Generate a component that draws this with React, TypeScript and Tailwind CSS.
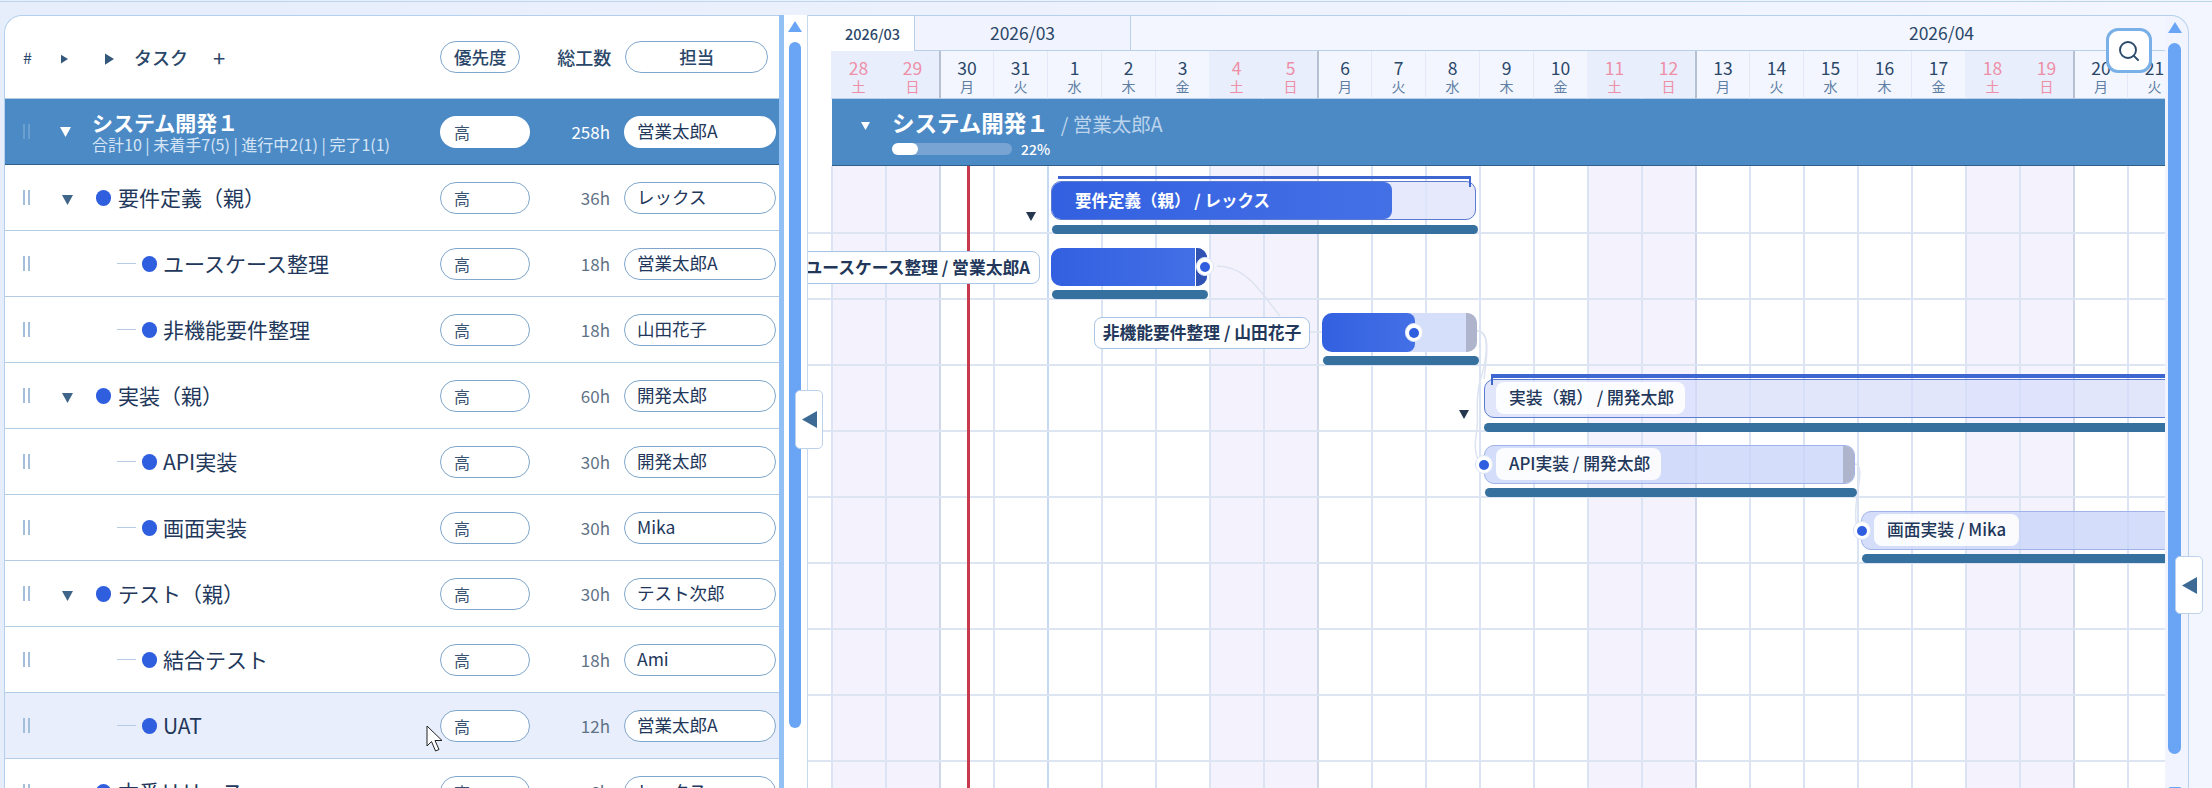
import { Search } from "lucide-react";

const rows = [
  { name: "要件定義（親）", hours: "36h", owner: "レックス", parent: true },
  { name: "ユースケース整理", hours: "18h", owner: "営業太郎A" },
  { name: "非機能要件整理", hours: "18h", owner: "山田花子" },
  { name: "実装（親）", hours: "60h", owner: "開発太郎", parent: true },
  { name: "API実装", hours: "30h", owner: "開発太郎" },
  { name: "画面実装", hours: "30h", owner: "Mika" },
  { name: "テスト（親）", hours: "30h", owner: "テスト次郎", parent: true },
  { name: "結合テスト", hours: "18h", owner: "Ami" },
  { name: "UAT", hours: "12h", owner: "営業太郎A", hover: true },
  { name: "本番リリース", hours: "6h", owner: "レックス", parent: true },
];

const weekNames = ["土", "日", "月", "火", "水", "木", "金"];
const dates = [28, 29, 30, 31, ...Array.from({ length: 21 }, (_, i) => i + 1)];
const days = dates.map((d, i) => ({ d, w: weekNames[i % 7], first: d === 1 }));

const Down = ({ className }: { className: string }) => (
  <svg viewBox="0 0 10 10" className={className}>
    <polygon points="0,1 10,1 5,10" fill="currentColor" />
  </svg>
);

const Right = ({ className }: { className: string }) => (
  <svg viewBox="0 0 8 10" className={className}>
    <polygon points="0,0 8,5 0,10" fill="currentColor" />
  </svg>
);

const Left = ({ className }: { className: string }) => (
  <svg viewBox="0 0 15 17" className={className}>
    <polygon points="15,0 15,17 0,8.5" fill="currentColor" />
  </svg>
);

const Grip = ({ className }: { className: string }) => (
  <div className={`h-[15px] w-[7px] border-x-2 ${className}`} />
);

const Knob = ({ className }: { className: string }) => (
  <div className={`absolute z-30 flex h-[19px] w-[18px] items-center justify-center rounded-full border border-[#dbe5f7] bg-white ${className}`}>
    <div className="h-[10px] w-[10px] rounded-full bg-[#2f5fdf]" />
  </div>
);

const TaskRow = ({ row }: { row: (typeof rows)[number] }) => (
  <div className={`flex h-[66px] shrink-0 items-center border-b border-[#b3cce6] ${row.hover ? "bg-[#e8eefb]" : "bg-white"}`}>
    <div className="ml-[18px] w-[36px] shrink-0">
      <Grip className="border-[#a3bfdc]" />
    </div>
    <div className="flex w-[381px] shrink-0 items-center">
      {row.parent ? (
        <>
          <Down className="ml-[3px] mt-[3px] h-[11px] w-[11px] text-[#3f6588]" />
          <div className="ml-[23px] h-[16px] w-[15px] rounded-full bg-[#2f5fdf]" />
          <span className="ml-[7px] text-[21px] leading-none text-[#22375a]">{row.name}</span>
        </>
      ) : (
        <>
          <div className="ml-[58px] h-px w-[19px] bg-[#b7cbe4]" />
          <div className="ml-[6px] h-[16px] w-[15px] rounded-full bg-[#2f5fdf]" />
          <span className="ml-[6px] text-[21px] leading-none text-[#22375a]">{row.name}</span>
        </>
      )}
    </div>
    <div className="flex h-[32px] w-[90px] shrink-0 items-center rounded-full border border-[#80a6cc] bg-white pl-[13px] text-[16px] text-[#3a5272]">高</div>
    <div className="w-[80px] shrink-0 text-right text-[17px] text-[#5f7286]">{row.hours}</div>
    <div className="ml-[14px] flex h-[32px] w-[152px] shrink-0 items-center rounded-full border border-[#80a6cc] bg-white pl-[12px] text-[17.5px] text-[#22375a]">{row.owner}</div>
  </div>
);

const Sheet = () => (
  <div className="flex h-full w-[775px] shrink-0 flex-col overflow-hidden rounded-tl-[18px] border-l border-t border-[#b5d0ec] bg-white">
    <div className="flex h-[83px] shrink-0 items-center border-b border-[#b3cce6] text-[17.5px] font-medium text-[#2a4668]">
      <span className="ml-[18px] w-[36px] text-[16px] font-normal">#</span>
      <Right className="ml-[2px] mt-[4px] h-[10px] w-[7px] text-[#33587a]" />
      <Right className="ml-[37px] mt-[4px] h-[12px] w-[9px] text-[#33587a]" />
      <span className="ml-[20px] text-[18px]">タスク</span>
      <span className="ml-[25px] text-[22px] font-normal leading-none">+</span>
      <div className="ml-[215px] flex h-[32px] w-[80px] shrink-0 items-center justify-center rounded-full border border-[#80a6cc]">優先度</div>
      <span className="ml-[37px] w-[54px] shrink-0 whitespace-nowrap text-[18px]">総工数</span>
      <div className="ml-[14px] flex h-[32px] w-[143px] shrink-0 items-center justify-center rounded-full border border-[#80a6cc]">担当</div>
    </div>
    <div className="flex h-[66px] shrink-0 items-center border-b border-[#2f5f8a] bg-[#4c8ac6]">
      <div className="ml-[18px] w-[36px] shrink-0">
        <Grip className="border-[#6b9fd0]" />
      </div>
      <div className="flex w-[381px] shrink-0 items-center">
        <Down className="ml-[1px] h-[11px] w-[11px] text-white" />
        <div className="ml-[21px] flex flex-col">
          <span className="text-[21px] font-bold leading-[25px] text-white">システム開発１</span>
          <span className="whitespace-nowrap text-[16px] leading-[19px] text-[#d6e5f5]">合計10 | 未着手7(5) | 進行中2(1) | 完了1(1)</span>
        </div>
      </div>
      <div className="flex h-[32px] w-[90px] shrink-0 items-center rounded-full bg-white pl-[14px] text-[16px] text-[#3a5272]">高</div>
      <div className="w-[80px] shrink-0 text-right text-[17px] text-white">258h</div>
      <div className="ml-[14px] flex h-[32px] w-[152px] shrink-0 items-center rounded-full bg-white pl-[13px] text-[17.5px] text-[#22375a]">営業太郎A</div>
    </div>
    {rows.map((row) => (
      <TaskRow key={row.name} row={row} />
    ))}
  </div>
);

const BarLabel = ({ className, children }: { className: string; children: string }) => (
  <div className={`absolute z-20 flex h-[32px] items-center whitespace-nowrap rounded-[8px] text-[16.8px] text-[#22375a] ${className}`}>{children}</div>
);

const Bottom = ({ className }: { className: string }) => (
  <div className={`absolute z-10 h-[8.5px] rounded-full bg-[#35709f] ${className}`} />
);

const Timeline = () => (
  <div className="flex w-[1357px] shrink-0 flex-col overflow-hidden border-t border-[#b5d0ec] bg-white">
    <div className="flex h-[35px] shrink-0 text-[17.5px] text-[#2a4668]">
      <div className="flex w-[106px] shrink-0 items-center justify-center bg-white pl-[23px] text-[14.5px] font-medium">2026/03</div>
      <div className="flex w-[216px] shrink-0 items-center justify-center border-b border-l border-[#b9d0ea] bg-[#f1f4fe]">2026/03</div>
      <div className="flex w-[1622px] shrink-0 items-center justify-center border-b border-l border-[#b9d0ea] bg-[#f3f6fe]">2026/04</div>
    </div>
    <div className="flex h-[48px] shrink-0 bg-white">
      <div className="w-[23px] shrink-0" />
      {days.map((day, i) => {
        const off = day.w === "土" || day.w === "日";
        return (
          <div
            key={i}
            className={`flex w-[54px] shrink-0 flex-col items-center border-b border-b-[#b9d0ea] pt-[7px] ${off ? "bg-[#e8eefb]" : "bg-[#f3f6fe]"} ${day.w === "月" ? "border-l-2 border-l-[#b5c0d3]" : off ? "border-l border-l-transparent" : "border-l border-l-[#e3e9f6]"}`}
          >
            <span className={`text-[17.5px] leading-[20px] ${off ? "text-[#ee8fa8]" : "text-[#2a4668]"}`}>{day.d}</span>
            <span className={`text-[14px] leading-[16px] ${off ? "text-[#ee8fa8]" : "text-[#5e7ea3]"}`}>{day.w}</span>
          </div>
        );
      })}
    </div>
    <div className="flex h-[67px] shrink-0 bg-white">
      <div className="w-[24px] shrink-0" />
      <div className="flex flex-1 border-b border-[#2f5f8a] bg-[#4c8ac6]">
        <Down className="ml-[29px] mt-[22px] h-[9px] w-[9px] text-white" />
        <div className="ml-[22px] flex flex-col">
          <div className="flex items-baseline">
            <span className="mt-[5px] text-[22.5px] font-bold leading-[36px] text-white">システム開発１</span>
            <span className="ml-[12px] text-[19.5px] text-[#bcd4ec]">/ 営業太郎A</span>
          </div>
          <div className="mt-[3px] flex items-center">
            <div className="h-[12px] w-[120px] rounded-full bg-[#78a4d4]">
              <div className="h-[12px] w-[26px] rounded-full bg-white" />
            </div>
            <span className="ml-[9px] text-[14px] font-medium leading-[12px] text-white">22%</span>
          </div>
        </div>
      </div>
    </div>
    <div className="relative flex-1 overflow-hidden bg-white">
      {Array.from({ length: 10 }, (_, r) => (
        <div key={r} className="flex h-[66px] border-t-2 border-[#dde5f3] first:border-t-0">
          <div className="w-[23px] shrink-0" />
          {days.map((day, i) => (
            <div
              key={i}
              className={`w-[54px] shrink-0 border-l-2 ${day.w === "土" || day.w === "日" ? "bg-[#f4f3fd]" : ""} ${day.w === "月" ? "border-[#d0d7e8]" : day.first ? "border-[#c6d8f4]" : "border-[#dbe4f5]"}`}
            />
          ))}
        </div>
      ))}

      <div className="absolute left-[159px] top-0 z-[1] h-full w-[2.5px] bg-[#c73a4e]" />

      <svg className="absolute left-0 top-0 z-[5] h-[640px] w-[1357px]" fill="none" stroke="#dde3f0" strokeWidth="1.5">
        <path d="M409 100 C440 100 455 130 472 150" />
        <path d="M502 166 L514 166" />
        <path d="M669 165 C682 165 680 190 672 215 C666 240 672 250 668 270 C666 285 668 295 676 299" />
        <path d="M669 165 C684 165 678 195 676 213" />
        <path d="M1047 298 C1056 298 1050 320 1048 340 C1047 355 1048 365 1054 365" />
      </svg>

      {/* 要件定義 */}
      <div className="absolute left-[250px] top-[10px] z-20 h-[3px] w-[412px] bg-[#3e66d0]" />
      <div className="absolute left-[661px] top-[10px] z-20 h-[11px] w-[2px] bg-[#3e66d0]" />
      <div className="absolute left-[243px] top-[15px] z-10 h-[39px] w-[425px] overflow-hidden rounded-[10px] border border-[#5a7bd0] bg-[#dfe3fa]/80">
        <div className="flex h-full w-[340px] items-center rounded-r-[8px] bg-linear-to-r from-[#3360e0] to-[#4470e6] pl-[23px] text-[16.5px] font-semibold text-white">要件定義（親） / レックス</div>
      </div>
      <Down className="absolute left-[218px] top-[45px] z-10 h-[10px] w-[10px] text-[#24374f]" />
      <Bottom className="left-[244px] top-[59px] w-[426px]" />

      {/* ユースケース整理 */}
      <BarLabel className="-left-[8px] top-[85px] h-[33px] w-[240px] justify-end border border-[#a9c4e4] bg-white pr-[9px] font-semibold">ユースケース整理 / 営業太郎A</BarLabel>
      <div className="absolute left-[243px] top-[82px] z-10 flex h-[38px] w-[156px] justify-end overflow-hidden rounded-[10px] bg-linear-to-r from-[#3360e0] to-[#4470e6]">
        <div className="h-full w-[12px] border-l border-white bg-[#2f52b3]" />
      </div>
      <Knob className="left-[388px] top-[91px]" />
      <Bottom className="left-[244px] top-[124px] w-[156px]" />

      {/* 非機能要件整理 */}
      <BarLabel className="left-[286px] top-[151px] w-[216px] justify-center border border-[#a9c4e4] bg-white font-semibold">非機能要件整理 / 山田花子</BarLabel>
      <div className="absolute left-[514px] top-[147px] z-10 flex h-[39px] w-[155px] justify-between overflow-hidden rounded-[10px] bg-[#d5dffa]">
        <div className="h-full w-[93px] rounded-r-[8px] bg-linear-to-r from-[#3360e0] to-[#4470e6]" />
        <div className="h-full w-[11px] bg-[#aeb4cb]" />
      </div>
      <Knob className="left-[597px] top-[157px]" />
      <Bottom className="left-[514.5px] top-[190px] w-[156px]" />

      {/* 実装 */}
      <div className="absolute left-[683px] top-[208px] z-20 h-[3.5px] w-[700px] bg-[#3e66d0]" />
      <div className="absolute left-[683px] top-[208px] z-20 h-[11px] w-[2px] bg-[#3e66d0]" />
      <div className="absolute left-[675.5px] top-[213px] z-10 h-[39px] w-[700px] rounded-l-[10px] border border-[#5a7bd0] bg-[#d6dcf9]/70" />
      <BarLabel className="left-[688px] top-[216px] w-[189px] bg-white/90 pl-[13px] font-medium">実装（親） / 開発太郎</BarLabel>
      <Down className="absolute left-[651px] top-[243px] z-10 h-[10px] w-[10px] text-[#24374f]" />
      <Bottom className="left-[676px] top-[257px] w-[700px]" />

      {/* API実装 */}
      <div className="absolute left-[676px] top-[279px] z-10 flex h-[38.5px] w-[371px] justify-end overflow-hidden rounded-[10px] border border-[#9fb2ea] bg-[#c9d5f8]/80">
        <div className="h-full w-[11px] bg-[#aeb4cb]" />
      </div>
      <BarLabel className="left-[688px] top-[282px] w-[165px] bg-white/90 pl-[13px] font-medium">API実装 / 開発太郎</BarLabel>
      <Knob className="left-[667px] top-[289px]" />
      <Bottom className="left-[676.5px] top-[322px] w-[372px]" />

      {/* 画面実装 */}
      <div className="absolute left-[1053px] top-[345px] z-10 h-[39px] w-[330px] rounded-l-[10px] border border-[#9fb2ea] bg-[#c9d5f8]/80" />
      <BarLabel className="left-[1066px] top-[348px] w-[145px] bg-white/90 pl-[13px] font-medium">画面実装 / Mika</BarLabel>
      <Knob className="left-[1045px] top-[355px]" />
      <Bottom className="left-[1054px] top-[388px] w-[330px]" />
    </div>
  </div>
);

export default function App() {
  return (
    <div className="relative h-[788px] w-[2212px] overflow-hidden bg-linear-to-r from-[#e6edfb] to-[#f3f6ff] font-['Noto_Sans_CJK_JP','Noto_Sans',sans-serif]">
      <div className="mt-[1px] h-[14px] border-t border-[#bcd5ee]" />
      <div className="flex h-[773px] pl-[4px]">
        <Sheet />
        <div className="w-[5px] shrink-0 bg-[#93c0f5]" />
        <div className="flex w-[24px] shrink-0 flex-col items-center border-r border-[#c5d8ee] bg-white pt-[6px] pr-[1px]">
          <div className="h-0 w-0 border-x-[7px] border-b-[11px] border-x-transparent border-b-[#6aa5f5]" />
          <div className="mt-[10px] h-[686px] w-[12.5px] rounded-full bg-[#6aa5f5]" />
        </div>
        <Timeline />
        <div className="flex w-[24px] shrink-0 flex-col items-center rounded-tr-[18px] border-r border-t border-[#b5d0ec] bg-[#f1f4fe] pt-[6px] pr-[4px]">
          <div className="h-0 w-0 border-x-[7px] border-b-[11px] border-x-transparent border-b-[#6aa5f5]" />
          <div className="mt-[10px] h-[711px] w-[13px] shrink-0 rounded-full bg-[#6aa5f5]" />
          <div className="mt-[33px] h-[4px] w-[14px] shrink-0 rounded-t-[3px] bg-[#6aa5f5]" />
        </div>
      </div>

      <button className="absolute left-[2106px] top-[28px] flex h-[45px] w-[46px] items-center justify-center rounded-[12px] border-[3px] border-[#7ab0e8] bg-white text-[#2b4a6b]">
        <Search size={24} strokeWidth={1.9} />
      </button>
      <div className="absolute left-[795px] top-[390px] flex h-[59px] w-[28px] items-center justify-center rounded-[5px] border border-[#bcd2ec] bg-white text-[#3c6a94]">
        <Left className="h-[17px] w-[15px]" />
      </div>
      <div className="absolute left-[2175px] top-[556px] flex h-[58px] w-[28px] items-center justify-center rounded-[5px] border border-[#bcd2ec] bg-white text-[#3c6a94]">
        <Left className="h-[17px] w-[15px]" />
      </div>
      <svg viewBox="0 0 18 27" className="absolute left-[426px] top-[725px] h-[27px] w-[18px]">
        <path d="M1 1 L1 21 L5.5 16.5 L9.5 26 L13 24.5 L9 15.5 L16 15.5 Z" fill="white" stroke="#222" strokeWidth="1" />
      </svg>
    </div>
  );
}
